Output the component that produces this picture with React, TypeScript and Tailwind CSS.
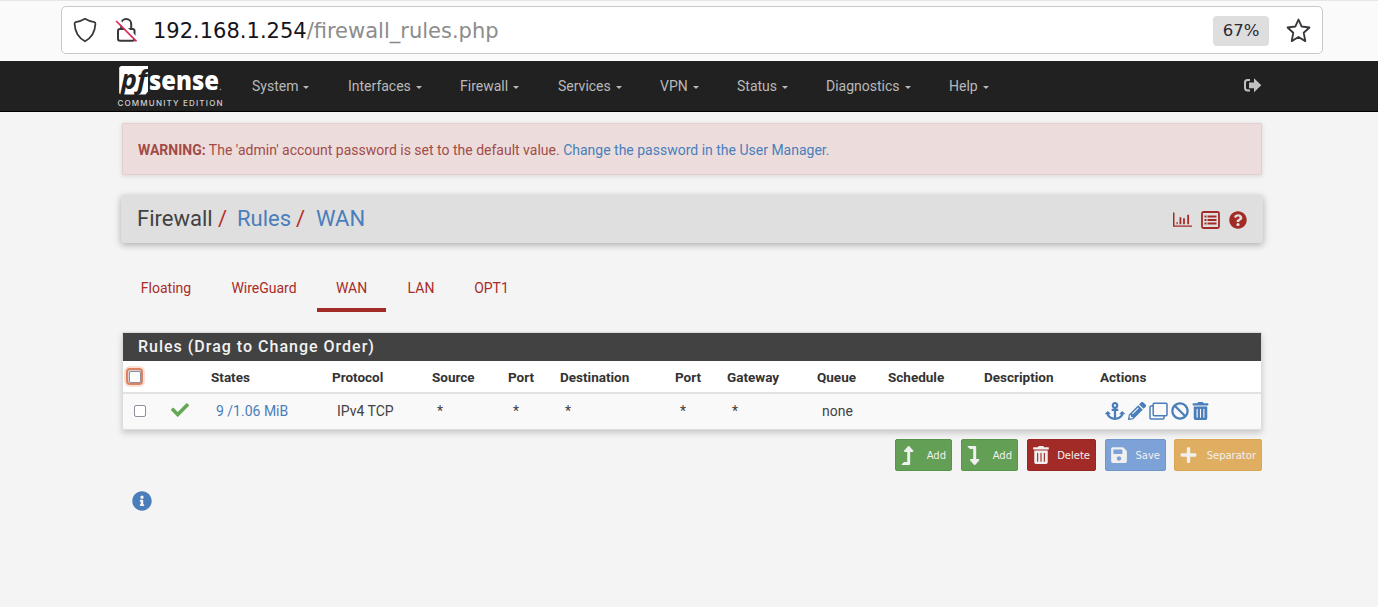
import React from "react";
import { FaAnchor, FaBan, FaCheck, FaInfoCircle, FaQuestionCircle, FaSave, FaPencilAlt, FaPlus, FaTrashAlt, FaLevelDownAlt, FaLevelUpAlt } from "react-icons/fa";

const menu = [
  { label: "System", cls: "w-[96px]" },
  { label: "Interfaces", cls: "w-[112px]" },
  { label: "Firewall", cls: "w-[98px]" },
  { label: "Services", cls: "w-[102px]" },
  { label: "VPN", cls: "w-[77px]" },
  { label: "Status", cls: "w-[89px]" },
  { label: "Diagnostics", cls: "w-[123px]" },
  { label: "Help", cls: "w-[60px]" },
];

const tabs = [
  { label: "Floating", cls: "w-[90px]" },
  { label: "WireGuard", cls: "w-[106px]" },
  { label: "WAN", cls: "w-[69px]", active: true },
  { label: "LAN", cls: "w-[70px]" },
  { label: "OPT1", cls: "w-[71px]" },
];

const columns = [
  { head: "States", value: "9 /1.06 MiB", cls: "w-[121px]", cell: "pl-[5px] text-[#4a7ebb]" },
  { head: "Protocol", value: "IPv4 TCP", cls: "w-[100px]", cell: "pl-[5px]" },
  { head: "Source", value: "*", cls: "w-[76px]", cell: "pl-[5px]" },
  { head: "Port", value: "*", cls: "w-[52px]", cell: "pl-[5px]" },
  { head: "Destination", value: "*", cls: "w-[115px]", cell: "pl-[5px]" },
  { head: "Port", value: "*", cls: "w-[52px]", cell: "pl-[5px]" },
  { head: "Gateway", value: "*", cls: "w-[90px]", cell: "pl-[5px]" },
  { head: "Queue", value: "none", cls: "w-[71px]", cell: "pl-[5px]" },
  { head: "Schedule", value: "", cls: "w-[96px]", cell: "" },
  { head: "Description", value: "", cls: "w-[116px]", cell: "" },
];

function AddressBar() {
  return (
    <div className="h-[61px] border-t border-[#e6e6e6] bg-[#fafafa] pl-[61px] pt-[5px]">
      <div className="flex h-[48px] w-[1262px] items-center rounded-[5px] border border-[#c8c8c8] bg-white pl-[11px]">
        <svg className="h-[26px] w-[24px]" viewBox="0 0 24 26" fill="none" stroke="#38383d" strokeWidth="1.8" strokeLinejoin="round">
          <path d="M12 1.800Q7 4.800 2.600 5.200 1.500 5.500 1.600 7C2 15 5 20.500 12 24.300 19 20.500 22 15 22.400 7q.1-1.500-1-1.800Q17 4.800 12 1.800z" />
        </svg>
        <svg className="ml-[18px] h-[26px] w-[24px]" viewBox="0 0 24 26" fill="none" strokeWidth="2">
          <rect x="3" y="12" width="16.500" height="11.800" rx="2" stroke="#38383d" />
          <path d="M6.200 11.500V7a5 5 0 0 1 10 0v4.500" stroke="#38383d" />
          <path d="M2.600 2.600 23 23" stroke="#fff" strokeWidth="3" />
          <path d="M1.200 4 21.500 24.300" stroke="#e22850" strokeWidth="1.700" />
        </svg>
        <div className="ml-[14px] w-[1060px] pt-px font-['DejaVu_Sans',sans-serif] text-[21px] leading-[28px] text-[#8c8c8c]">
          <span className="text-[#15141a]">192.168.1.254</span>/firewall_rules.php
        </div>
        <div className="mt-px flex h-[30px] w-[56px] items-center justify-center rounded-[4px] bg-[#dedede] font-['DejaVu_Sans',sans-serif] text-[16.500px] text-[#2b2a33]">67%</div>
        <svg className="ml-[17px] h-[25px] w-[25px]" viewBox="0 0 24 24" fill="none" stroke="#38383d" strokeWidth="1.800" strokeLinejoin="round">
          <path d="m12 1.500 3.100 6.700 7.400.9-5.500 5 1.500 8.100L12 18.300l-6.500 3.900L7 14.100l-5.500-5 7.400-.9z" />
        </svg>
      </div>
    </div>
  );
}

function Logo() {
  return (
    <div className="w-[135px] shrink-0">
      <svg className="h-[54px] w-[110px]" viewBox="0 -6 110 54">
        <path d="M4 1h27v25.500l-2.500 3H4.500Q2 29.500 2.200 27V2.500z" fill="#fff" />
        <text x="4" y="24" fontFamily="Open Sans, sans-serif" fontSize="27" fontWeight="700" fontStyle="italic" fill="#212121" textLength="26" lengthAdjust="spacingAndGlyphs">pf</text>
        <text x="32" y="25" fontFamily="Open Sans, sans-serif" fontSize="26" fontWeight="800" fill="#fff" textLength="70" lengthAdjust="spacingAndGlyphs">sense</text>
        <circle cx="103.500" cy="24.500" r=".8" fill="#999" />
        <text x="0.500" y="40.500" fontFamily="Inter, sans-serif" fontSize="8" fontWeight="500" fill="#d0d0d0" textLength="105" lengthAdjust="spacing">COMMUNITY EDITION</text>
      </svg>
    </div>
  );
}

function Navbar() {
  return (
    <nav className="flex h-[51px] items-center border-b border-black bg-[#212121] pl-[117px] text-[14px] text-[#b9b9b9]">
      <Logo />
      {menu.map((m) => (
        <div key={m.label} className={`flex shrink-0 items-center pb-[1px] ${m.cls}`}>
          {m.label}
          <svg className="ml-[5px] mt-[3px] h-[3px] w-[6px]" viewBox="0 0 6 3"><path d="M0 0h6L3 3z" fill="currentColor" /></svg>
        </div>
      ))}
      <svg className="mb-[2px] ml-[234px] h-[15px] w-[19px]" viewBox="0 0 19 15" fill="#c2c2c2">
        <path d="M7 2H4.500Q2 2 2 4.500v5Q2 12.500 4.500 12.500H7" fill="none" stroke="#c2c2c2" strokeWidth="2" />
        <path d="M11 .3 18.300 7.300 11 14.300v-4H6V4.500h5z" />
      </svg>
    </nav>
  );
}

function Heading() {
  return (
    <header className="mt-[20px] flex h-[48px] w-[1142px] items-center justify-between rounded-[3px] bg-[#dfdfdf] pl-[16px] pr-[16px] text-[22px] shadow-[0_2px_7px_rgba(0,0,0,0.3)]">
      <div className="flex">
        <span className="w-[81px] text-[#424242]">Firewall</span>
        <span className="w-[19px] text-[#b5302a]">/</span>
        <span className="w-[59px] text-[#4a7ebb]">Rules</span>
        <span className="w-[20px] text-[#b5302a]">/</span>
        <span className="text-[#4a7ebb]">WAN</span>
      </div>
      <div className="mt-px flex items-center gap-[9px] text-[#a32b26]">
        <svg className="h-[17px] w-[19px]" viewBox="0 0 2048 1792" fill="currentColor">
          <path d="M512 1152v256h-128v-256h128zM896 640v768h-192v-768h192zM2048 1536v128h-2048v-1536h160v1408h1888zM1280 768v640h-192v-640h192zM1728 384v1024h-192v-1024h192z" />
        </svg>
        <svg className="h-[18px] w-[19px]" viewBox="0 0 19 18">
          <rect x="1" y="1" width="17" height="16" rx="1.500" fill="none" stroke="currentColor" strokeWidth="1.800" />
          <path d="M3.500 5.500h2m1 0h9M3.500 9h2m1 0h9m-12 3.500h2m1 0h9" stroke="currentColor" strokeWidth="2" />
        </svg>
        <FaQuestionCircle className="h-[18px] w-[18px]" />
      </div>
    </header>
  );
}

function Tabs() {
  return (
    <div className="mt-[26px] flex h-[43px] text-[14px] text-[#a92c28]">
      {tabs.map((t) => (
        <div key={t.label} className={`flex shrink-0 justify-center pt-[9px] ${t.cls} ${t.active ? "border-b-[4px] border-[#a32b26]" : ""}`}>{t.label}</div>
      ))}
    </div>
  );
}

function CloneIcon() {
  return (
    <svg className="h-[18px] w-[19px]" viewBox="0 0 19 18" fill="none" stroke="currentColor" strokeWidth="1.500">
      <rect x="4.200" y="1.200" width="13.800" height="12.600" rx="1" />
      <path d="M4 4H2q-1 0-1 1v11q0 1 1 1h12q1 0 1-1v-2" />
    </svg>
  );
}

function RulesTable() {
  return (
    <section className="ml-[1px] mt-[20px] w-[1140px] border border-[#dcdcdc] bg-white text-[14px] text-[#424242] shadow-[0_3px_6px_rgba(0,0,0,0.18)]">
      <div className="flex h-[28px] items-center bg-[#424242] pl-[15px] text-[16px] font-medium tracking-[1px] text-[#f2f2f2]">Rules (Drag to Change Order)</div>
      <div className="flex h-[33px] items-center border-b-2 border-[#e2e2e2] text-[13.500px] font-bold text-[#333]">
        <div className="flex w-[88px] shrink-0 pl-[3px]">
          <span className="flex h-[17px] w-[17px] items-center justify-center rounded-[4px] border-2 border-[#dd835f] bg-[#d8d0d0] shadow-[0_0_0_2px_#fae0d5]">
            <span className="h-[12px] w-[12px] rounded-[2px] border border-[#8f8f9d] bg-white" />
          </span>
        </div>
        {columns.map((c, i) => <div key={i} className={`shrink-0 ${c.cls}`}>{c.head}</div>)}
        <div>Actions</div>
      </div>
      <div className="flex h-[35px] items-center bg-[#f9f9f9] pb-[2px]">
        <div className="flex w-[88px] shrink-0 items-center pl-[11px] pt-px">
          <span className="h-[12px] w-[12px] rounded-[2px] border border-[#8f8f9d] bg-white" />
          <FaCheck className="mb-[2px] ml-[25px] h-[18px] w-[18px] text-[#63a854]" />
        </div>
        {columns.map((c, i) => <div key={i} className={`shrink-0 ${c.cls} ${c.cell}`}>{c.value}</div>)}
        <div className="flex items-center gap-[3px] pl-[5px] text-[#4a7ebb]">
          <FaAnchor className="h-[18px] w-[20px]" />
          <FaPencilAlt className="h-[18px] w-[18px]" />
          <CloneIcon />
          <FaBan className="h-[18px] w-[18px]" />
          <FaTrashAlt className="h-[18px] w-[17px]" />
        </div>
      </div>
    </section>
  );
}

function Buttons() {
  const base = "flex h-[32px] items-center justify-between rounded-[2px] border pl-[5px] pr-[5px] font-['DejaVu_Sans',sans-serif] text-[10px] text-[#f0f0f0]";
  return (
    <div className="mt-[9px] flex w-[1141px] justify-end gap-[9px]">
      <button className={`${base} w-[57px] border-[#55964a] bg-[#639f54]`}><FaLevelUpAlt className="h-[19px] w-[13px]" /><span className="pt-[2px]">Add</span></button>
      <button className={`${base} w-[57px] border-[#55964a] bg-[#639f54]`}><FaLevelDownAlt className="h-[19px] w-[13px]" /><span className="pt-[2px]">Add</span></button>
      <button className={`${base} w-[69px] border-[#9a2622] bg-[#a32b27]`}><FaTrashAlt className="h-[18px] w-[16px]" /><span className="pt-[2px]">Delete</span></button>
      <button className={`${base} w-[61px] border-[#7196c9] bg-[#7da2d8]`}><FaSave className="h-[18px] w-[16px]" /><span className="pt-[2px]">Save</span></button>
      <button className={`${base} ml-[-1px] w-[88px] border-[#dba755] bg-[#e0ae60]`}><FaPlus className="h-[18px] w-[17px]" /><span className="pt-[2px]">Separator</span></button>
    </div>
  );
}

export default function App() {
  return (
    <div className="h-[607px] w-[1378px] overflow-hidden bg-[#f4f4f4] font-[Roboto,sans-serif] leading-[20px]">
      <AddressBar />
      <Navbar />
      <main className="pl-[121px] pt-[11px]">
        <div className="ml-[1px] flex h-[52px] w-[1140px] items-center border border-[#e5cdd0] bg-[#ecdddc] pl-[15px] pt-px text-[14px] text-[#a34b48] shadow-[0_1px_5px_rgba(0,0,0,0.12)]">
          <span><b>WARNING:</b> The 'admin' account password is set to the default value. <span className="text-[#4a7ebb]">Change the password in the User Manager.</span></span>
        </div>
        <Heading />
        <Tabs />
        <RulesTable />
        <Buttons />
        <FaInfoCircle className="ml-[11px] mt-[20px] h-[20px] w-[20px] text-[#4a7ebb]" />
      </main>
    </div>
  );
}
